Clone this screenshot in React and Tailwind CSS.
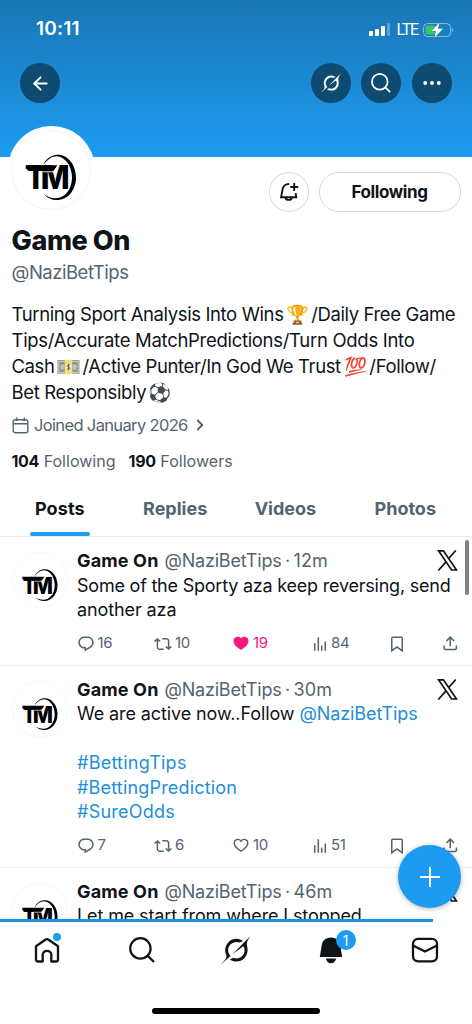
import React from 'react';
import { ArrowLeft, ChevronRight } from 'lucide-react';

const ICONS = {
  reply:
    'M1.751 10c0-4.42 3.584-8 8.005-8h4.366c4.49 0 8.129 3.64 8.129 8.13 0 2.96-1.607 5.68-4.196 7.11l-8.054 4.46v-3.69h-.067c-4.49.1-8.183-3.51-8.183-8.01zm8.005-6c-3.317 0-6.005 2.69-6.005 6 0 3.37 2.77 6.08 6.138 6.01l.351-.01h1.761v2.3l5.087-2.81c1.951-1.08 3.163-3.13 3.163-5.36 0-3.39-2.744-6.13-6.129-6.13H9.756z',
  repost:
    'M4.5 3.88l4.432 4.14-1.364 1.46L5.5 7.55V16c0 1.1.896 2 2 2H13v2H7.5c-2.209 0-4-1.79-4-4V7.55L1.432 9.48.068 8.02 4.5 3.88zM16.5 6H11V4h5.5c2.209 0 4 1.79 4 4v8.45l2.068-1.93 1.364 1.46-4.432 4.14-4.432-4.14 1.364-1.46 2.068 1.93V8c0-1.1-.896-2-2-2z',
  like:
    'M16.697 5.5c-1.222-.06-2.679.51-3.89 2.16l-.805 1.09-.806-1.09C9.984 6.01 8.526 5.44 7.304 5.5c-1.243.07-2.349.78-2.91 1.91-.552 1.12-.633 2.78.479 4.82 1.074 1.97 3.257 4.27 7.129 6.61 3.87-2.34 6.052-4.64 7.126-6.61 1.111-2.04 1.03-3.7.477-4.82-.561-1.13-1.666-1.84-2.908-1.91zm4.187 7.69c-1.351 2.48-4.001 5.12-8.379 7.67l-.503.3-.504-.3c-4.379-2.55-7.029-5.19-8.382-7.67-1.36-2.5-1.41-4.86-.514-6.67.887-1.79 2.647-2.91 4.601-3.01 1.651-.09 3.368.56 4.798 2.01 1.429-1.45 3.146-2.1 4.796-2.01 1.954.1 3.714 1.22 4.601 3.01.896 1.81.846 4.17-.514 6.67z',
  liked:
    'M20.884 13.19c-1.351 2.48-4.001 5.12-8.379 7.67l-.503.3-.504-.3c-4.379-2.55-7.029-5.19-8.382-7.67-1.36-2.5-1.41-4.86-.514-6.67.887-1.79 2.647-2.91 4.601-3.01 1.651-.09 3.368.56 4.798 2.01 1.429-1.45 3.146-2.1 4.796-2.01 1.954.1 3.714 1.22 4.601 3.01.896 1.81.846 4.17-.514 6.67z',
  views: 'M8.75 21V3h2v18h-2zM18 21V8.5h2V21h-2zM4 21l.004-10h2L6 21H4zm9.248 0v-7h2v7h-2z',
  bookmark:
    'M4 4.5C4 3.12 5.119 2 6.5 2h11C18.881 2 20 3.12 20 4.5v18.44l-8-5.71-8 5.71V4.5zM6.5 4c-.276 0-.5.22-.5.5v14.56l6-4.29 6 4.29V4.5c0-.28-.224-.5-.5-.5h-11z',
  share:
    'M12 2.59l5.7 5.7-1.41 1.42L13 6.41V16h-2V6.41l-3.3 3.3-1.41-1.42L12 2.59zM21 15l-.02 3.51c0 1.38-1.12 2.49-2.5 2.49H5.5C4.11 21 3 19.88 3 18.5V15h2v3.5c0 .28.22.5.5.5h12.98c.28 0 .5-.22.5-.5L19 15h2z'
};

const posts = [
  {
    id: 1,
    time: '12m',
    lines: [
      { text: 'Some of the Sporty aza keep reversing, send', tracking: 'tracking-[-0.22px]' },
      { text: 'another aza', tracking: 'tracking-[-0.1px]' }
    ],
    replies: 16,
    reposts: 10,
    likes: 19,
    views: 84,
    liked: true
  },
  {
    id: 2,
    time: '30m',
    lines: [
      { text: 'We are active now..Follow ', link: '@NaziBetTips', tracking: 'tracking-[-0.1px]' },
      { text: '' },
      { link: '#BettingTips', tracking: 'tracking-[0.25px]' },
      { link: '#BettingPrediction', tracking: 'tracking-[0.18px]' },
      { link: '#SureOdds', tracking: 'tracking-[0.25px]' }
    ],
    replies: 7,
    reposts: 6,
    likes: 10,
    views: 51
  },
  {
    id: 3,
    time: '46m',
    lines: [{ text: 'Let me start from where I stopped', tracking: 'tracking-[-0.12px]' }],
    replies: 5,
    reposts: 4,
    likes: 8,
    views: 60
  }
];

const Icon = ({ name, className }) => (
  <svg viewBox="0 0 24 24" fill="currentColor" className={className}>
    <path d={ICONS[name]} />
  </svg>
);

const GrokIcon = ({ className }) => (
  <svg viewBox="0 0 33 32" fill="currentColor" className={className}>
    <path d="M12.745 20.54l10.97-8.19c.539-.4 1.307-.244 1.564.38 1.349 3.288.746 7.241-1.938 9.955-2.683 2.714-6.417 3.31-9.83 1.954l-3.728 1.745c5.347 3.697 11.84 2.782 15.898-1.324 3.219-3.255 4.216-7.692 3.284-11.693l.008.009c-1.351-5.878.332-8.227 3.782-13.031L33 0l-4.54 4.59v-.014L12.743 20.544m-2.263 1.987c-3.837-3.707-3.175-9.446.1-12.755 2.42-2.449 6.388-3.448 9.852-1.979l3.72-1.737c-.67-.49-1.53-1.017-2.515-1.387-4.455-1.854-9.789-.931-13.41 2.728-3.483 3.523-4.579 8.94-2.697 13.561 1.405 3.454-.899 5.898-3.22 8.364C1.49 30.2.666 31.074 0 32l10.478-9.466" />
  </svg>
);

const SearchIcon = ({ className }) => (
  <svg viewBox="0 0 26 26" fill="none" stroke="currentColor" strokeWidth="2.2" className={className}>
    <circle cx="11.4" cy="11.4" r="10.2" />
    <path d="M18.6 18.6L25 25" />
  </svg>
);

const XLogo = ({ className }) => (
  <svg viewBox="0 0 21 21" fill="none" stroke="#0f1419" strokeWidth="1.7" className={className}>
    <path d="M1.500.8H6.400L19.500 20H14.600ZM18.800.5L11.500 8.800M1.300 20.500L9.200 11.600" />
  </svg>
);

const CashIcon = () => (
  <svg viewBox="0 0 24 16" className="mx-[2.5px] inline-block h-[16px] w-[23px] align-[-2px]">
    <rect x=".5" y=".8" width="23" height="14.200" fill="#8f9487" />
    <rect x="1.800" y="2.200" width="20.400" height="11.400" fill="none" stroke="#d3d6c9" strokeWidth=".9" />
    <ellipse cx="5.500" cy="8" rx="2.200" ry="3" fill="#bfc3b4" />
    <ellipse cx="18.500" cy="8" rx="2.200" ry="3" fill="#bfc3b4" />
    <rect x="8" y=".3" width="8" height="15.200" fill="#f3dc7a" />
    <circle cx="12" cy="8" r="3.500" fill="#fbf0bd" />
    <path d="M13.700 6.400C12.800 5.200 10.500 5.500 10.600 6.900C10.700 8.300 13.500 7.700 13.500 9.200C13.500 10.700 11.100 10.800 10.200 9.500M12 4.600V11.400" fill="none" stroke="#5b5637" strokeWidth=".9" />
  </svg>
);

// Club logo: lettering inside a crescent
const Logo = ({ className }) => (
  <svg viewBox="0 0 80 80" className={className}>
    <circle cx="40" cy="40" r="39.5" fill="#fff" stroke="#f3f4f5" />
    <path d="M32 35C36 27 42 24.700 47 24.700C57 24.700 65 35 65 47.500C65 60 57 70 46 70C41 70 36 68 33 64C37 67.500 41 68.500 45 68.300C54 68 61 59.500 61 47.500C61 36 54 26.800 46 26.200C41 26 37 29 32 35Z" fill="#000" />
    <g fontFamily="Inter, sans-serif" fontWeight="900" fill="#000">
      <text x="15.800" y="59.300" fontSize="33" textLength="18" lengthAdjust="spacingAndGlyphs">T</text>
      <text x="29.800" y="59.300" fontSize="32.500" textLength="29" lengthAdjust="spacingAndGlyphs" fontWeight="800" stroke="#fff" strokeWidth="1.600" paintOrder="stroke">M</text>
    </g>
    <path d="M14.700 35.300H46.500L42.500 41H18L14.700 38.500Z" fill="#000" />
    <path d="M32 41.800H42.500L46.800 35.800" fill="none" stroke="#fff" strokeWidth=".9" />
  </svg>
);

const StatusBar = () => (
  <div className="flex h-[58px] items-center justify-between pl-[36px] pr-[18px] text-white">
    <span className="pt-px text-[19px] font-semibold tracking-[0.2px]">10:11</span>
    <div className="flex items-center pt-px">
      <div className="mr-[6px] flex h-[13px] items-end gap-[2px]">
        <i className="h-[5px] w-[4px] rounded-[1px] bg-white" />
        <i className="h-[7px] w-[4px] rounded-[1px] bg-white" />
        <i className="h-[10px] w-[4px] rounded-[1px] bg-white" />
        <i className="h-[13px] w-[3px] rounded-[1px] bg-white/30" />
      </div>
      <span className="mr-[5px] font-['Roboto',sans-serif] text-[16px] tracking-[-1.2px]">LTE</span>
      <svg viewBox="0 0 31 16" className="h-[16px] w-[31px]">
        <rect x=".6" y="1.600" width="27" height="13" rx="4" fill="none" stroke="#fff" strokeOpacity=".5" />
        <path d="M29 6c1.500.6 1.500 3.600 0 4.200z" fill="#fff" fillOpacity=".5" />
        <rect x="2.500" y="3.500" width="10" height="9.200" rx="2" fill="#34c759" />
        <path d="M16.500.5L8.500 9H13L11.500 15.500L20 6.700H15Z" fill="#fff" stroke="#1d83c8" strokeWidth=".8" paintOrder="stroke" />
      </svg>
    </div>
  </div>
);

const RoundButton = ({ children }) => (
  <button className="flex size-[40px] items-center justify-center rounded-full bg-[#0f4a70] text-white">{children}</button>
);

const Header = () => (
  <header className="h-[157px] bg-linear-to-b from-[#1976b5] to-[#1d9cf1]">
    <StatusBar />
    <div className="flex justify-between pl-[20px] pr-[20.5px] pt-[5px]">
      <RoundButton>
        <ArrowLeft className="size-[21px]" strokeWidth={2.2} />
      </RoundButton>
      <div className="flex gap-[10.25px]">
        <RoundButton>
          <GrokIcon className="size-[20px]" />
        </RoundButton>
        <RoundButton>
          <SearchIcon className="size-[20px]" />
        </RoundButton>
        <RoundButton>
          <svg viewBox="0 0 18 4" className="w-[18px]" fill="currentColor">
            <circle cx="2.200" cy="2" r="1.900" />
            <circle cx="9" cy="2" r="1.900" />
            <circle cx="15.800" cy="2" r="1.900" />
          </svg>
        </RoundButton>
      </div>
    </div>
  </header>
);

const ProfileInfo = () => (
  <section className="h-[325px] px-[11.5px]">
    <div className="flex h-[70px] items-start justify-between">
      <div className="relative -ml-[4px] -mt-[31px] rounded-full bg-white p-[3.5px]">
        <Logo className="size-[80px]" />
      </div>
      <div className="mt-[15px] flex gap-[10px]">
        <button className="flex size-[40px] items-center justify-center rounded-full border border-[#cfd9de]">
          <svg viewBox="0 0 20 20" fill="none" stroke="#0f1419" strokeWidth="1.900" className="size-[20px]">
            <path d="M10.200 2C6.500 1.800 3.900 4.200 3.500 7.700L2.100 15.200H17.300L16.600 11" />
            <path d="M6.500 15.500C7 18.700 12.400 18.700 12.900 15.500M15.200 1V9M11.200 5H19.200" />
          </svg>
        </button>
        <button className="h-[40px] w-[142px] rounded-full border border-[#cfd9de] pt-px text-[17px] font-bold tracking-[-0.4px] text-[#0f1419]">
          Following
        </button>
      </div>
    </div>
    <h1 className="text-[27px] font-extrabold leading-[28px] tracking-[-0.4px]">Game On</h1>
    <p className="mt-[3px] text-[18.5px] leading-[28px] tracking-[-0.48px] text-[#536471]">@NaziBetTips</p>
    <div className="mt-[15px] whitespace-nowrap text-[18.5px] leading-[26px]">
      <p className="h-[26px] tracking-[-0.38px]">
        Turning Sport Analysis Into Wins<span className="ml-[2px] mr-[3px]">🏆</span>/Daily Free Game
      </p>
      <p className="h-[26px] tracking-[-0.3px]">Tips/Accurate MatchPredictions/Turn Odds Into</p>
      <p className="h-[26px] tracking-[-0.39px]">
        Cash<CashIcon />/Active Punter/In God We Trust<span className="ml-[3px] mr-[3px]">💯</span>/Follow/
      </p>
      <p className="h-[26px] tracking-[-0.37px]">
        Bet Responsibly<span className="ml-[1.5px]">⚽</span>
      </p>
    </div>
    <div className="mt-[9px] flex h-[22px] items-center text-[16.5px] tracking-[-0.65px] text-[#536471]">
      <svg viewBox="0 0 17 17" fill="none" stroke="currentColor" strokeWidth="1.400" className="ml-[0.5px] mr-[5px] size-[17px]">
        <rect x="1.200" y="2.700" width="14.600" height="13" rx="2" />
        <path d="M1.200 6.700H15.800M4.700.5V4M12.300.5V4" />
      </svg>
      Joined January 2026
      <ChevronRight className="ml-[3px] size-[18px]" strokeWidth={2.4} />
    </div>
    <div className="mt-[14px] flex h-[22px] items-center gap-[13px] text-[16px] tracking-[0.03px] text-[#536471]">
      <span><b className="tracking-[-0.3px] text-[#0f1419]">104</b> Following</span>
      <span><b className="tracking-[-0.3px] text-[#0f1419]">190</b> Followers</span>
    </div>
  </section>
);

const Tabs = () => (
  <nav className="flex h-[55px] justify-between border-b border-[#e6eaec] pb-px pl-[35px] pr-[36px] text-[18px] font-bold text-[#536471]">
    <div className="relative flex items-center tracking-[0.1px] text-[#0f1419]">
      Posts
      <span className="absolute -inset-x-[5px] -bottom-px h-[4px] rounded-full bg-[#1d9bf0]" />
    </div>
    <div className="ml-[11px] flex items-center">Replies</div>
    <div className="flex items-center">Videos</div>
    <div className="ml-[11px] flex items-center">Photos</div>
  </nav>
);

const Post = ({ post }) => (
  <article className="flex gap-[9.5px] border-b border-[#eceff0] pl-[11.5px] pr-[14px] pt-[11px]">
    <Logo className="mt-[4px] size-[56px] shrink-0" />
    <div className="min-w-0 flex-1">
      <div className="flex h-[25.5px] items-center justify-between text-[18px]">
        <p className="flex whitespace-nowrap tracking-[-0.2px] text-[#536471]">
          <b className="mr-[6px] tracking-[0.15px] text-[#0f1419]">Game On</b>
          <span>@NaziBetTips</span>
          <span className="mx-[3.5px]">·</span>
          <span className="tracking-[0.1px]">{post.time}</span>
        </p>
        <XLogo className="size-[21px]" />
      </div>
      {post.lines.map((line, i) => (
        <div key={i} className={line.tracking}>
          <p className="h-[24.5px] whitespace-nowrap text-[18px] leading-[24.5px]">
            {line.text}
            {line.link && <span className="text-[#1d8fdc]">{line.link}</span>}
          </p>
        </div>
      ))}
      <div className="flex h-[42px] items-center text-[15px] tracking-[-0.3px] text-[#536471]">
        <div className="flex w-[77px] items-center gap-[3px]">
          <Icon name="reply" className="-ml-[0.5px] size-[18px]" />{post.replies}
        </div>
        <div className="flex w-[78px] items-center gap-[3px]">
          <Icon name="repost" className="size-[18px]" />{post.reposts}
        </div>
        <div className={post.liked ? 'flex w-[79px] items-center gap-[3px] text-[#f91880]' : 'flex w-[79px] items-center gap-[3px]'}>
          <Icon name={post.liked ? 'liked' : 'like'} className="-mt-[1px] size-[18px]" />{post.likes}
        </div>
        <div className="flex w-[77px] items-center gap-[2.5px]">
          <Icon name="views" className="-ml-[0.5px] size-[18px]" />{post.views}
        </div>
        <Icon name="bookmark" className="size-[18px]" />
        <Icon name="share" className="-mr-[1.5px] ml-auto size-[18.5px]" />
      </div>
    </div>
  </article>
);

const BottomNav = () => (
  <footer className="relative flex h-[105px] flex-col bg-white">
    <div className="h-[3px] w-[433px] bg-[#1d8fe0]" />
    <div className="flex h-[56px] items-center justify-between pl-[33px] pr-[33.5px] text-[#0f1419]">
      <div className="relative">
        <svg viewBox="0 0 28 28" fill="none" stroke="currentColor" strokeWidth="2.300" strokeLinejoin="round" className="size-[28px]">
          <path d="M3 10.300L12.300 3.700Q14 2.500 15.700 3.700L25 10.300V23.500Q25 25.500 23 25.500H18.300V19C18.300 13.500 9.700 13.500 9.700 19V25.500H5Q3 25.500 3 23.500Z" />
        </svg>
        <span className="absolute right-0 -top-[3px] size-[8px] rounded-full bg-[#1d9bf0]" />
      </div>
      <SearchIcon className="ml-[1.5px] size-[26px]" />
      <GrokIcon className="size-[30px]" />
      <div className="relative">
        <svg viewBox="0 0 28 28" fill="currentColor" className="size-[28px]">
          <path d="M14 1.500C8.500 1.500 5 5 4.600 10L2.800 21H25.200L23.400 10C23 5 19.500 1.500 14 1.500ZM8.800 22.600H19.200C18.500 25.700 16.500 27.300 14 27.300C11.500 27.300 9.500 25.700 8.800 22.600Z" />
        </svg>
        <span className="absolute -right-[11px] -top-[6px] flex size-[20px] items-center justify-center rounded-full bg-[#1d9bf0] text-[14px] text-white">1</span>
      </div>
      <svg viewBox="0 0 28 28" fill="none" stroke="currentColor" strokeWidth="2.300" className="size-[28px]">
        <rect x="2" y="2.800" width="24" height="22.500" rx="5" />
        <path d="M2 9.500L14 15.500L26 9.500" />
      </svg>
    </div>
    <div className="mx-auto mt-auto mb-[10px] h-[6px] w-[168px] rounded-full bg-black" />
  </footer>
);

const App = () => (
  <div className="relative flex h-[1024px] w-[472px] flex-col overflow-hidden bg-white font-['Inter',sans-serif] text-[#0f1419]">
    <main className="h-[919px] overflow-hidden">
      <Header />
      <ProfileInfo />
      <Tabs />
      {posts.map(post => (
        <Post key={post.id} post={post} />
      ))}
    </main>
    <BottomNav />
    <div className="absolute right-[3px] top-[540px] h-[55px] w-[4px] rounded-full bg-[#7f7f7f]" />
    <button className="absolute right-[11px] top-[845px] flex size-[63px] items-center justify-center rounded-full bg-[#1d9bf0] shadow-[0_1px_5px_rgba(0,0,0,0.3)]">
      <svg viewBox="0 0 20 20" stroke="#fff" strokeWidth="2" className="size-[20px]">
        <path d="M10 0V20M0 10H20" />
      </svg>
    </button>
  </div>
);

export default App;
